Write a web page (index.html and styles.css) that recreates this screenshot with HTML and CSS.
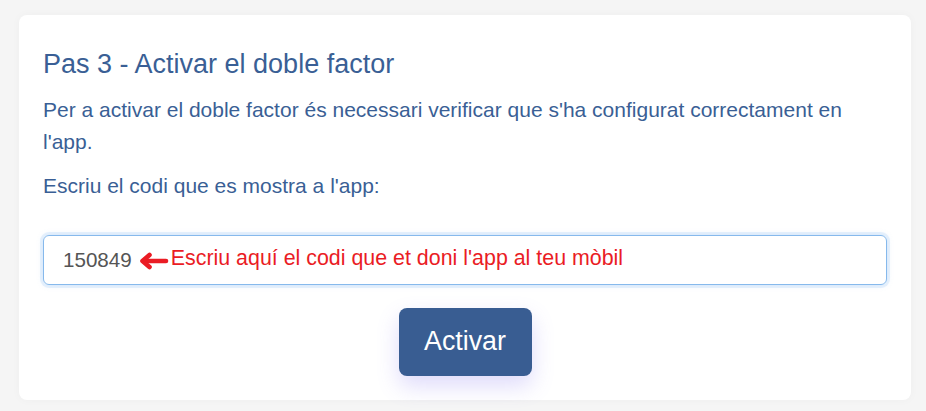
FILE: index.html
```html
<!DOCTYPE html>
<html lang="ca">
<head>
<meta charset="utf-8">
<title>Pas 3 - Activar el doble factor</title>
<link rel="stylesheet" href="styles.css">
</head>
<body>
<main class="card">
  <h2 class="title">Pas 3 - Activar el doble factor</h2>
  <p class="text">Per a activar el doble factor és necessari verificar que s'ha configurat correctament en l'app.</p>
  <p class="text">Escriu el codi que es mostra a l'app:</p>
  <div class="field">
    <span class="code">150849</span>
    <span class="note">
      <svg class="arrow" width="30" height="18" viewBox="0 0 30 18" aria-hidden="true">
        <path d="M27 9 L5 9" stroke="#ea1c24" stroke-width="4.6" stroke-linecap="round" fill="none"/>
        <path d="M10.5 3 L3.5 9 L10.5 15" stroke="#ea1c24" stroke-width="4.6" stroke-linecap="round" stroke-linejoin="round" fill="none"/>
      </svg>
      <span class="note-text">Escriu aquí el codi que et doni l'app al teu mòbil</span>
    </span>
  </div>
  <div class="actions">
    <button class="btn" type="button">Activar</button>
  </div>
</main>
</body>
</html>
```
FILE: styles.css
```css
html, body {
  margin: 0;
  padding: 0;
}
body {
  background: #f5f5f5;
  font-family: "Liberation Sans", Arial, sans-serif;
  padding: 15px 15px 11px 19px;
}
.card {
  width: 892px;
  box-sizing: border-box;
  background: #ffffff;
  border-radius: 8px;
  box-shadow: 0 0 10px rgba(0, 0, 0, 0.03);
  padding: 33px 24px 24px 24px;
  display: flex;
  flex-direction: column;
}
.title {
  margin: 0 0 14px 0;
  font-size: 27px;
  line-height: 32.4px;
  font-weight: 400;
  color: #3a5f95;
}
.text {
  margin: 0 0 13px 0;
  font-size: 21px;
  line-height: 31.5px;
  color: #3a5f95;
}
.field {
  margin-top: 20px;
  height: 50px;
  box-sizing: border-box;
  border: 1px solid #86b9ec;
  border-radius: 6px;
  box-shadow: 0 0 0 3px rgba(140, 190, 245, 0.18), 0 0 6px rgba(120, 180, 240, 0.25);
  display: flex;
  align-items: center;
  padding-left: 19px;
  position: relative;
}
.code {
  font-size: 20.6px;
  color: #555555;
  line-height: 1;
  margin-top: 1px;
}
.note {
  display: flex;
  align-items: center;
  margin-left: 7px;
  margin-top: -3px;
}
.arrow {
  display: block;
  margin-top: 5px;
}
.note-text {
  margin-left: 2px;
  font-size: 21.4px;
  color: #ea1c24;
  line-height: 1;
}
.actions {
  display: flex;
  justify-content: center;
  margin-top: 23px;
}
.btn {
  width: 133px;
  height: 68px;
  border: none;
  border-radius: 8px;
  background: #395d92;
  color: #ffffff;
  font-family: "Liberation Sans", Arial, sans-serif;
  font-size: 26.8px;
  padding: 0;
  box-shadow: 0 10px 22px rgba(110, 90, 235, 0.22);
  cursor: pointer;
}
```
